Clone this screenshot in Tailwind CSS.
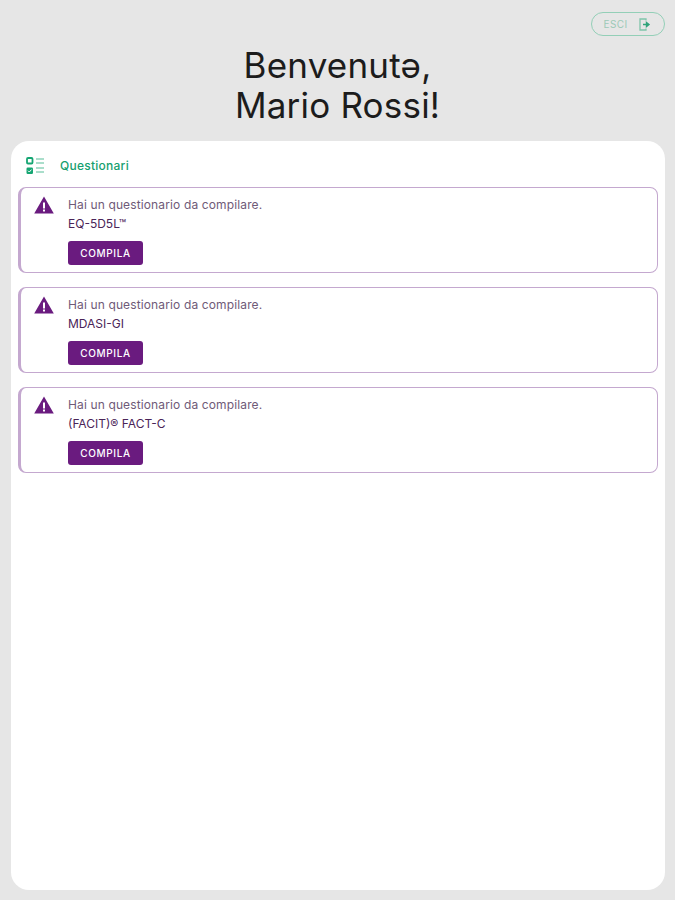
<!DOCTYPE html>
<html lang="it">
<head>
  <meta charset="UTF-8" />
  <meta name="viewport" content="width=device-width, initial-scale=1.0" />
  <title>Questionari</title>
  <script src="https://cdn.jsdelivr.net/npm/@tailwindcss/browser@4"></script>
</head>
<body class="bg-[#e6e6e6] text-[#1a1a1a] font-['Inter','Noto_Sans',sans-serif]">
  <div class="h-[900px] flex flex-col overflow-hidden">
    <!-- Header -->
    <header class="h-[141px] shrink-0 flex flex-col">
      <div class="flex justify-end pt-[12px] pr-[10px]">
        <button class="w-[74px] h-[24px] flex items-center justify-center gap-[10px] pr-[2px] rounded-full border-[1.5px] border-[#93cfb7] text-[#9cc9b7] text-[10px] leading-none tracking-[0.4px]">
          <span>ESCI</span>
          <svg class="w-[13px] h-[13px]" viewBox="0 0 13 13" fill="none">
            <path d="M8 2.5V1H2v11h6v-1.5" stroke="#7fc5aa" stroke-width="1.3"/>
            <path d="M5 6.5h5M8.5 4.5l2.5 2-2.5 2z" stroke="#2fa37a" stroke-width="1.4" fill="#2fa37a"/>
          </svg>
        </button>
      </div>
      <h1 class="mt-[9px] text-center text-[35px] leading-[40px] tracking-[0.2px] text-[#1c1c1c]">Benvenutə,<br>Mario Rossi!</h1>
    </header>

    <!-- Card -->
    <main class="ml-[11px] mr-[10px] h-[749px] bg-white rounded-[18px] px-[7px]">
      <div class="h-[46px] flex items-center pl-[8px] pt-[3px] gap-[14px]">
        <svg class="w-[20px] h-[18px]" viewBox="0 0 20 18" fill="none">
          <rect x="1" y="1" width="5.5" height="5.5" rx="1" stroke="#16a673" stroke-width="1.8"/>
          <rect x="0.5" y="10.5" width="6.5" height="6.5" rx="1.2" fill="#16a673"/>
          <path d="M2 13.7l1.3 1.3 2.2-2.4" stroke="#fff" stroke-width="1"/>
          <path d="M10 2h8M10 6h8M10 11h8M10 15h8" stroke="#8fd3ba" stroke-width="1.6"/>
        </svg>
        <span class="text-[12px] font-medium tracking-[0.25px] text-[#16a06f]">Questionari</span>
      </div>

      <div class="flex flex-col gap-[14px]">
        <div class="h-[86px] flex border border-[#c4a8cf] border-l-[3px] rounded-[8px] pl-[13px]">
          <svg class="mt-[8px] w-[20px] h-[18px] shrink-0" viewBox="0 0 20 18">
            <path fill-rule="evenodd" d="M10 0.5L19.8 17.5H0.2ZM9 6.5v6h2v-6ZM9 13.5v2h2v-2Z" fill="#6a1b7f"/>
          </svg>
          <div class="ml-[14px] pt-[9px]">
            <p class="text-[12px] leading-[16px] tracking-[0.13px] text-[#6f5a78]">Hai un questionario da compilare.</p>
            <p class="mt-[3px] text-[12px] leading-[16px] text-[#4a2458]">EQ-5D5L™</p>
            <button class="mt-[9px] w-[75px] h-[24px] bg-[#6a1b7f] rounded-[3px] text-white text-[10px] font-medium tracking-[0.65px]">COMPILA</button>
          </div>
        </div>

        <div class="h-[86px] flex border border-[#c4a8cf] border-l-[3px] rounded-[8px] pl-[13px]">
          <svg class="mt-[8px] w-[20px] h-[18px] shrink-0" viewBox="0 0 20 18">
            <path fill-rule="evenodd" d="M10 0.5L19.8 17.5H0.2ZM9 6.5v6h2v-6ZM9 13.5v2h2v-2Z" fill="#6a1b7f"/>
          </svg>
          <div class="ml-[14px] pt-[9px]">
            <p class="text-[12px] leading-[16px] tracking-[0.13px] text-[#6f5a78]">Hai un questionario da compilare.</p>
            <p class="mt-[3px] text-[12px] leading-[16px] text-[#4a2458]">MDASI-GI</p>
            <button class="mt-[9px] w-[75px] h-[24px] bg-[#6a1b7f] rounded-[3px] text-white text-[10px] font-medium tracking-[0.65px]">COMPILA</button>
          </div>
        </div>

        <div class="h-[86px] flex border border-[#c4a8cf] border-l-[3px] rounded-[8px] pl-[13px]">
          <svg class="mt-[8px] w-[20px] h-[18px] shrink-0" viewBox="0 0 20 18">
            <path fill-rule="evenodd" d="M10 0.5L19.8 17.5H0.2ZM9 6.5v6h2v-6ZM9 13.5v2h2v-2Z" fill="#6a1b7f"/>
          </svg>
          <div class="ml-[14px] pt-[9px]">
            <p class="text-[12px] leading-[16px] tracking-[0.13px] text-[#6f5a78]">Hai un questionario da compilare.</p>
            <p class="mt-[3px] text-[12px] leading-[16px] text-[#4a2458]">(FACIT)® FACT-C</p>
            <button class="mt-[9px] w-[75px] h-[24px] bg-[#6a1b7f] rounded-[3px] text-white text-[10px] font-medium tracking-[0.65px]">COMPILA</button>
          </div>
        </div>
      </div>
    </main>
  </div>
</body>
</html>
